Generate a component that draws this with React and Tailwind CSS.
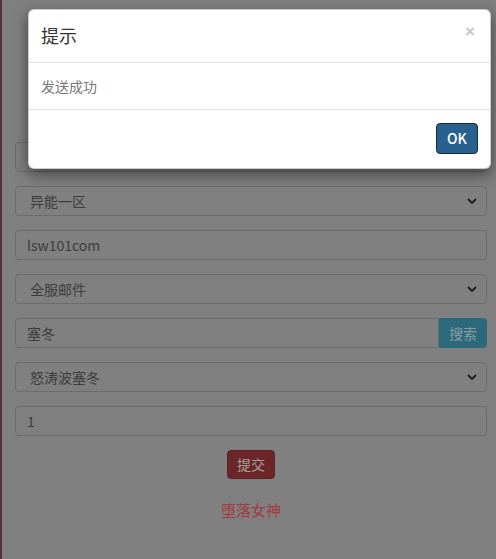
import React from 'react';

const font = { fontFamily: '"Noto Sans CJK SC", "Open Sans", sans-serif' };

function Chevron() {
    return (
        <svg width="12" height="12" viewBox="0 0 12 12" className="shrink-0">
            <path d="M2.5 4.5 L6 8 L9.5 4.5" fill="none" stroke="#262626" strokeWidth="2" strokeLinecap="round" strokeLinejoin="round" />
        </svg>
    );
}

function Select({ label }) {
    return (
        <div className="h-[30px] rounded-[4px] border border-[#6c6c6c] flex items-center justify-between pl-[14px] pr-[8px] text-[14px] text-[#3c3c3c]">
            <span>{label}</span>
            <Chevron />
        </div>
    );
}

function Input({ value }) {
    return (
        <div className="h-[30px] rounded-[4px] border border-[#6c6c6c] flex items-center pl-[11px] text-[14px] text-[#3c3c3c]">
            {value}
        </div>
    );
}

export default function App() {
    return (
        <div className="relative w-[496px] h-[559px] overflow-hidden bg-[#808080]" style={font}>
            <div className="absolute left-0 top-0 bottom-0 w-[2px] bg-[#5a2e38]" />

            {/* page behind the backdrop */}
            <div className="pl-[15px] pr-[9px] pt-[142px] flex flex-col gap-[14px]">
                <Input value="" />
                <Select label="异能一区" />
                <Input value="lsw101com" />
                <Select label="全服邮件" />
                <div className="flex h-[30px]">
                    <div className="flex-1 rounded-l-[4px] border border-[#6c6c6c] flex items-center pl-[11px] text-[14px] text-[#3c3c3c]">塞冬</div>
                    <div className="w-[48px] rounded-r-[4px] bg-[#2c6a7b] flex items-center justify-center text-[14px] text-[#8a9ca2]">搜索</div>
                </div>
                <Select label="怒涛波塞冬" />
                <Input value="1" />
                <div className="flex justify-center">
                    <div className="w-[48px] h-[29px] rounded-[4px] bg-[#6c2627] border border-[#622222] flex items-center justify-center text-[14px] text-[#a2a2a2]">提交</div>
                </div>
                <div className="text-center text-[15px] leading-[20px] text-[#a3383e] mt-[7px]">堕落女神</div>
            </div>

            {/* modal */}
            <div className="absolute left-[28px] top-[9px] w-[463px] h-[160px] bg-white rounded-[6px] shadow-[0_5px_15px_rgba(0,0,0,0.5)] border border-black/20 flex flex-col">
                <div className="h-[53px] border-b border-[#e5e5e5] flex items-center justify-between pl-[12px] pr-[15px]">
                    <span className="text-[18px] text-[#333] leading-none -mt-[3px]">提示</span>
                    <span className="text-[17px] font-bold text-[#c8c8c8] leading-none -mt-[10px]" style={{ fontFamily: '"Liberation Sans", sans-serif' }}>×</span>
                </div>
                <div className="h-[47px] border-b border-[#e5e5e5] flex items-center pl-[12px] text-[14px] text-[#777]">
                    发送成功
                </div>
                <div className="flex-1 flex items-start justify-end pt-[13px] pr-[12px]">
                    <div className="w-[42px] h-[31px] rounded-[4px] bg-[#286090] border border-[#122b40] flex items-center justify-center text-[14px] font-medium text-white">OK</div>
                </div>
            </div>
        </div>
    );
}
